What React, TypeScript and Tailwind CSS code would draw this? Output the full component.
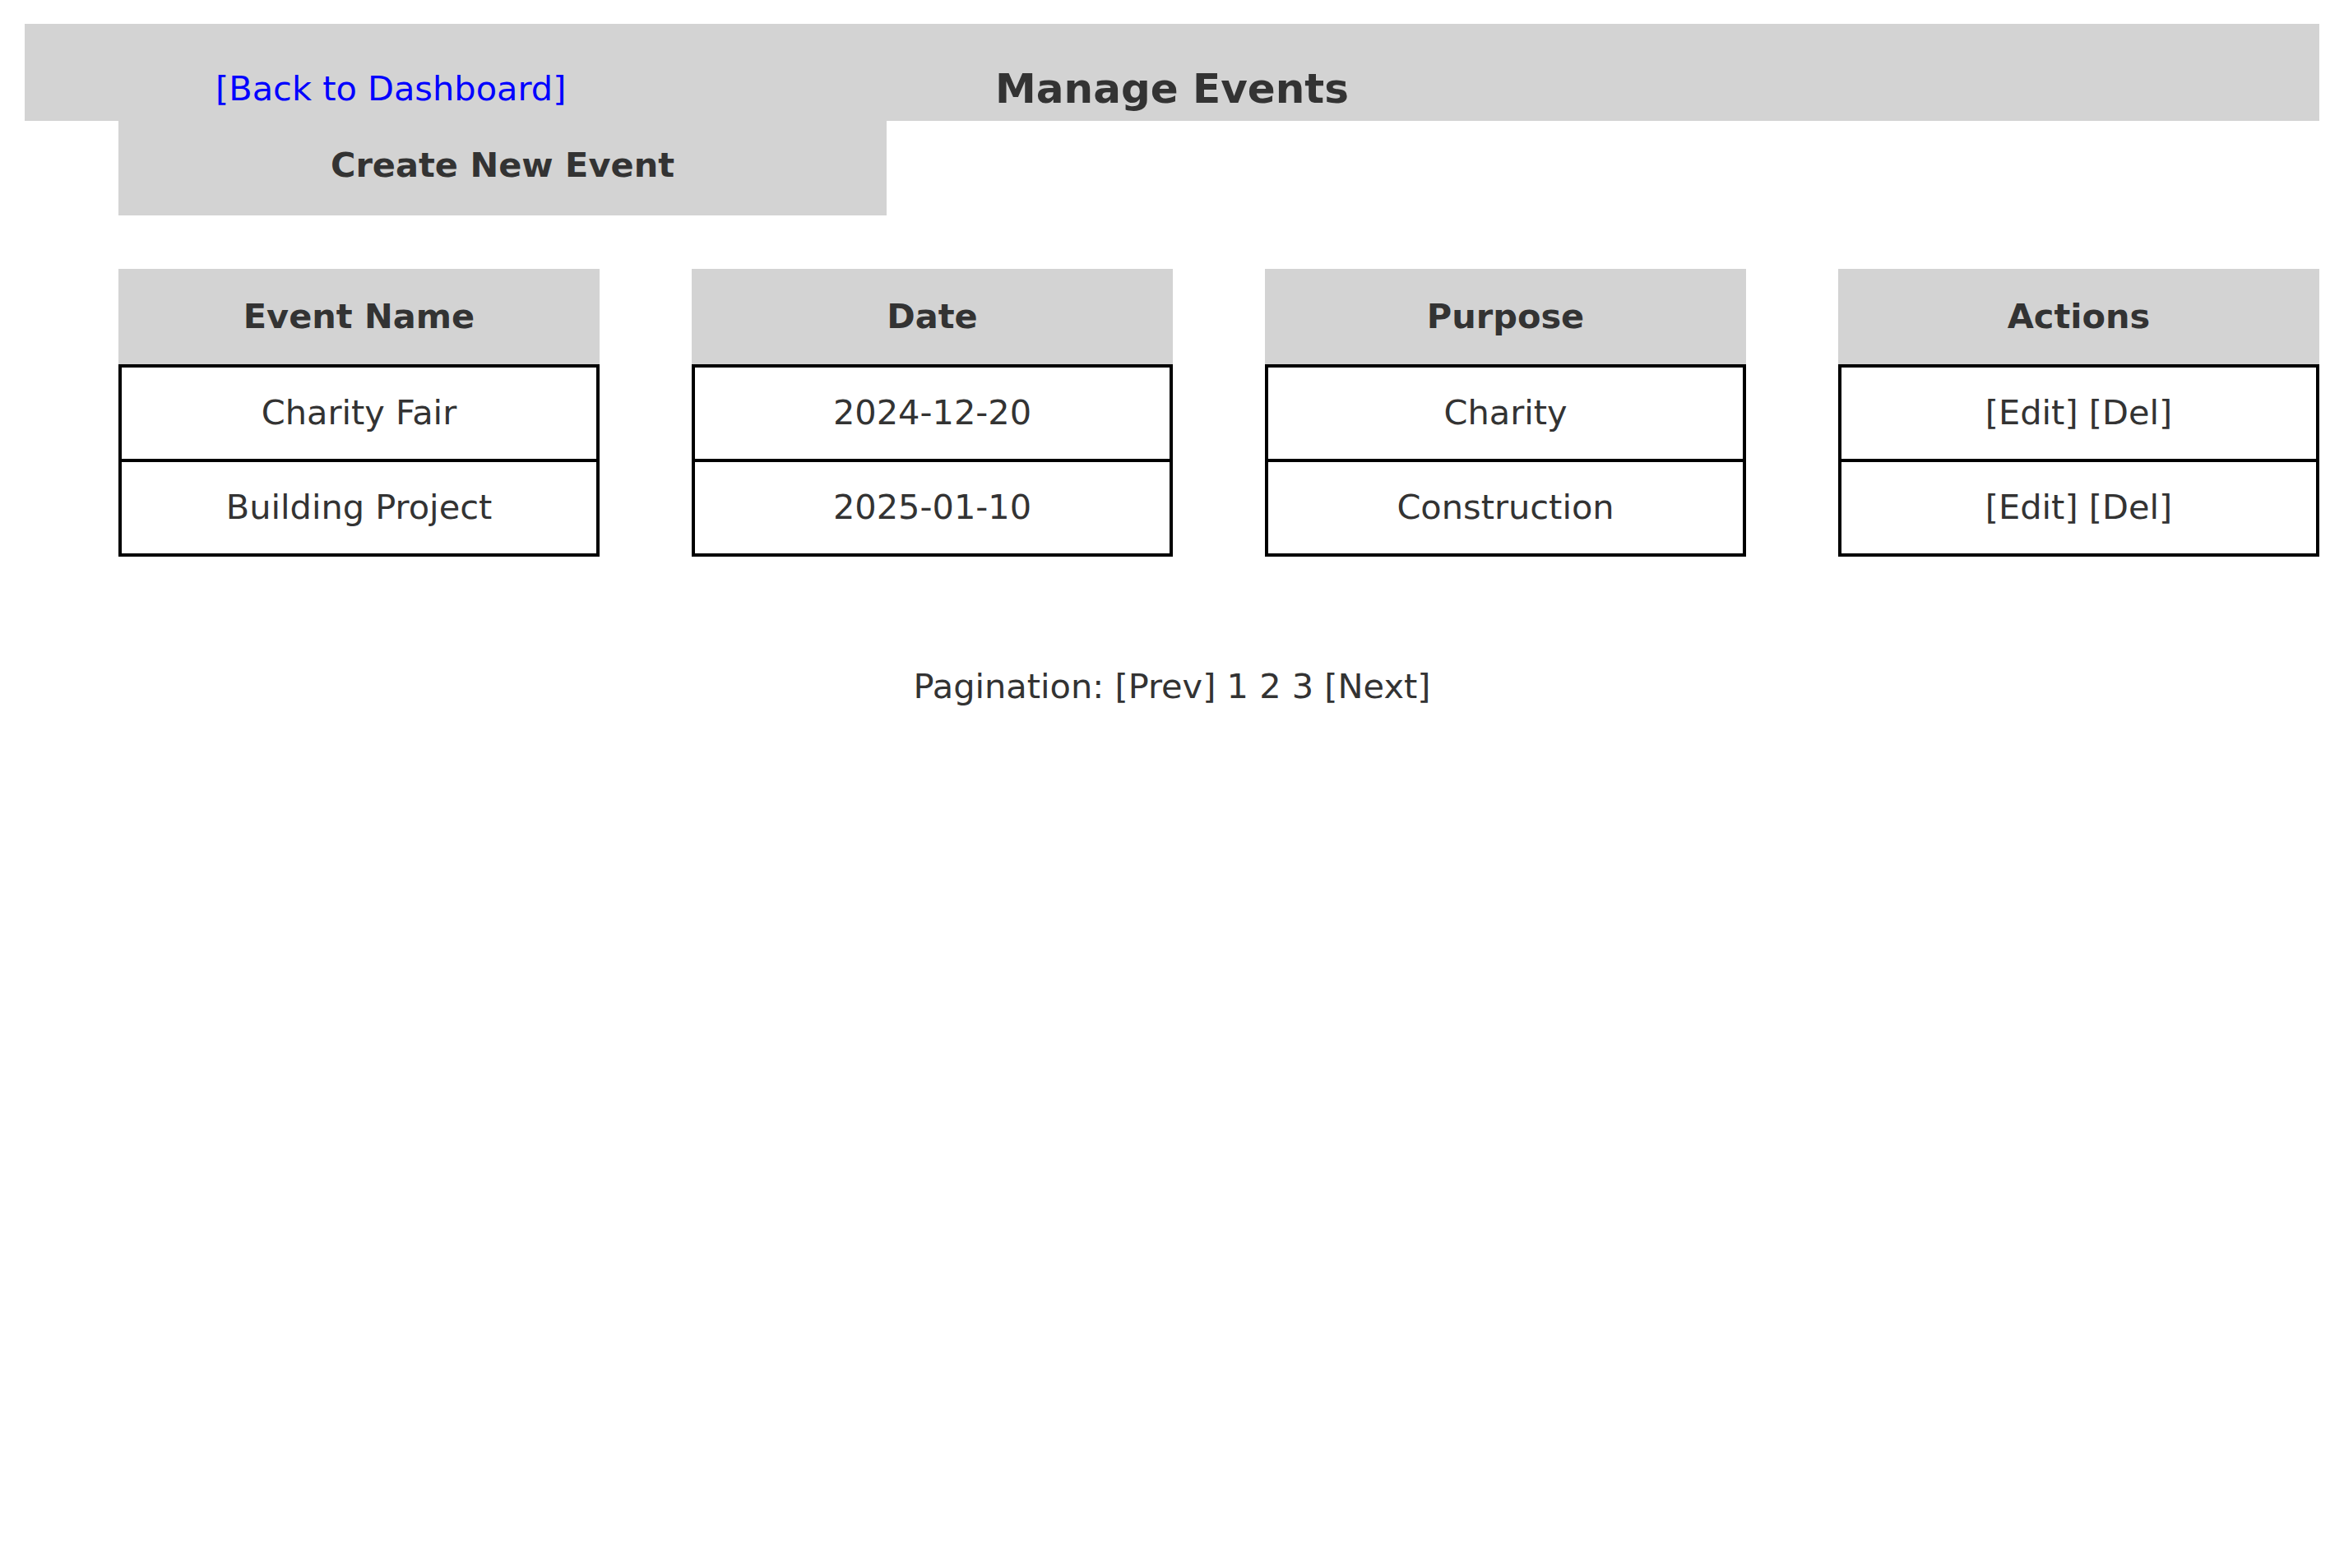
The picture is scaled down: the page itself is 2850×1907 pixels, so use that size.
import React from "react";

type EventRow = {
  name: string;
  date: string;
  purpose: string;
};

const events: EventRow[] = [
  { name: "Charity Fair", date: "2024-12-20", purpose: "Charity" },
  { name: "Building Project", date: "2025-01-10", purpose: "Construction" },
];

const columns: { title: string; cell: (e: EventRow) => string }[] = [
  { title: "Event Name", cell: (e) => e.name },
  { title: "Date", cell: (e) => e.date },
  { title: "Purpose", cell: (e) => e.purpose },
  { title: "Actions", cell: () => "[Edit] [Del]" },
];

export default function App() {
  return (
    <div className="min-h-screen bg-white px-[30px] py-[29px] font-['DejaVu_Sans',sans-serif] text-[#333]">
      {/* top bar */}
      <header className="grid h-[118px] grid-cols-[1fr_auto_1fr] items-center bg-[#d3d3d3] pt-[41px]">
        <div className="pl-[232px]">
          <a href="#" className="text-[41.5px] leading-[1.164] text-[#0000ff]">
            [Back to Dashboard]
          </a>
        </div>
        <h1 className="text-[50px] font-bold leading-[1.164]">Manage Events</h1>
        <div></div>
      </header>

      <div className="ml-[114px]">
        <button
          type="button"
          className="flex h-[115px] w-[934px] items-center justify-center bg-[#d3d3d3] pb-[7px] text-[41.5px] font-bold leading-[1.164] text-[#333]"
        >
          Create New Event
        </button>

        <div className="mt-[65px] grid grid-cols-4 gap-[112px]">
          {columns.map((col) => (
            <div key={col.title}>
              <div className="flex h-[116px] items-center justify-center bg-[#d3d3d3] text-[41.5px] font-bold leading-[1.164]">
                {col.title}
              </div>
              <div className="divide-y-4 divide-black border-4 border-black">
                {events.map((ev) => (
                  <div
                    key={ev.name}
                    className="box-content flex h-[111px] items-center justify-center text-[41.5px] leading-[1.164]"
                  >
                    {col.cell(ev)}
                  </div>
                ))}
              </div>
            </div>
          ))}
        </div>
      </div>

      <p className="mt-[134px] text-center text-[41.5px] leading-[1.164]">
        Pagination: [Prev] 1 2 3 [Next]
      </p>
    </div>
  );
}
